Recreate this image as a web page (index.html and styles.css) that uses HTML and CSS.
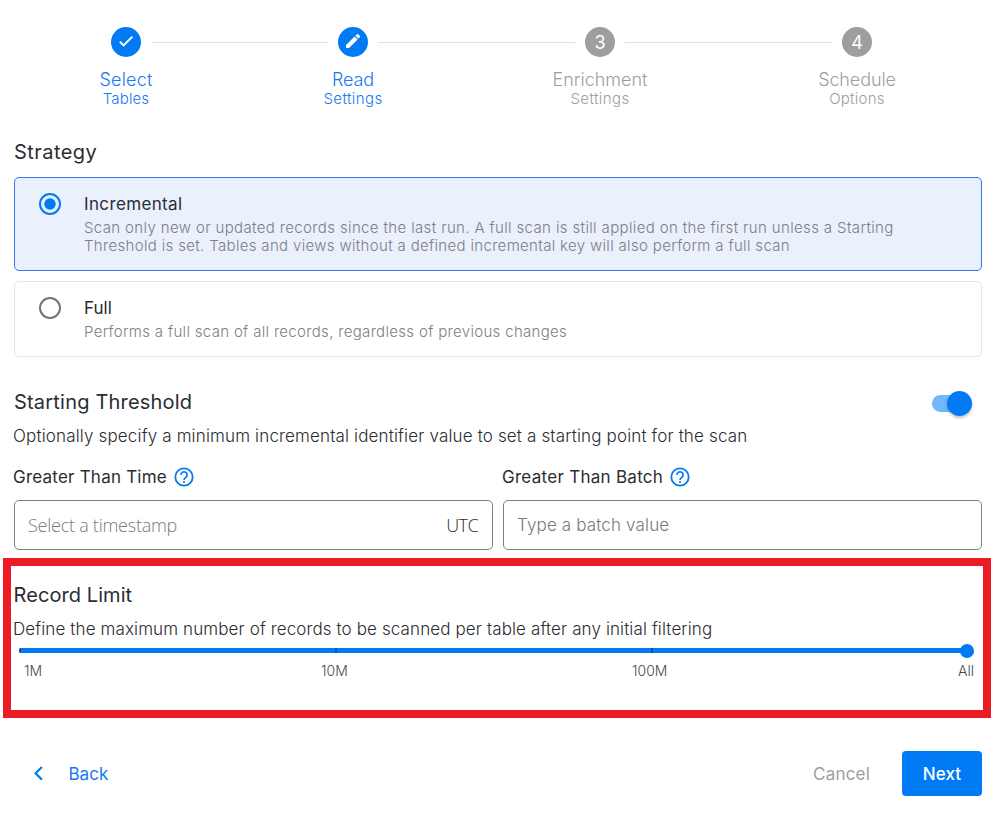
FILE: index.html
```html
<!DOCTYPE html>
<html lang="en">
<head>
<meta charset="utf-8">
<title>Scan settings</title>
<link rel="stylesheet" href="styles.css">
</head>
<body>
<main class="page">
  <nav class="stepper">
    <div class="step active">
      <span class="dot"><svg width="30" height="30" viewBox="0 0 30 30"><path d="M8.900 14.700l3.700 3.700 8.800-8.800" fill="none" stroke="#fff" stroke-width="2"/></svg></span>
      <span class="name t-select">Select</span><span class="sub t-tables">Tables</span>
    </div>
    <i class="line"></i>
    <div class="step active">
      <span class="dot"><svg width="30" height="30" viewBox="0 0 30 30"><path d="M8 18.100V21h3l8.600-8.500-3-3zM21.900 10.100a.9.9 0 0 0 0-1.200l-1.700-1.700a.9.9 0 0 0-1.200 0l-1.600 1.600 3 3z" fill="#fff"/></svg></span>
      <span class="name t-read">Read</span><span class="sub t-settings">Settings</span>
    </div>
    <i class="line"></i>
    <div class="step">
      <span class="dot">3</span>
      <span class="name">Enrichment</span><span class="sub t-settings">Settings</span>
    </div>
    <i class="line"></i>
    <div class="step">
      <span class="dot">4</span>
      <span class="name t-schedule">Schedule</span><span class="sub t-options">Options</span>
    </div>
  </nav>

  <h2 class="heading t-strategy">Strategy</h2>
  <div class="choices">
    <div class="choice selected">
      <i class="radio"></i>
      <div class="choice-text">
        <div class="choice-name t-incremental">Incremental</div>
        <div class="choice-desc"><span class="t-desc1">Scan only new or updated records since the last run. A full scan is still applied on the first run unless a Starting</span><br><span class="t-desc2">Threshold is set. Tables and views without a defined incremental key will also perform a full scan</span></div>
      </div>
    </div>
    <div class="choice">
      <i class="radio"></i>
      <div class="choice-text">
        <div class="choice-name">Full</div>
        <div class="choice-desc t-desc3">Performs a full scan of all records, regardless of previous changes</div>
      </div>
    </div>
  </div>

  <div class="threshold-head">
    <h2 class="heading t-threshold">Starting Threshold</h2>
    <span class="switch"><i class="knob"></i></span>
  </div>
  <p class="para t-para1">Optionally specify a minimum incremental identifier value to set a starting point for the scan</p>

  <div class="fields">
    <div class="field">
      <div class="label"><span class="t-time">Greater Than Time</span><svg width="20" height="20" viewBox="0 0 20 20"><circle cx="10" cy="10" r="8.700" fill="none" stroke="#007bf5" stroke-width="1.800"/><path d="M6.900 8a3.100 3.100 0 1 1 5.200 2.200C11 11.100 10 11.500 10 13" fill="none" stroke="#007bf5" stroke-width="1.700"/><path d="M9.100 14h1.800v1.800H9.100z" fill="#007bf5"/></svg></div>
      <div class="input system"><span class="placeholder t-stamp">Select a timestamp</span><span class="t-utc">UTC</span></div>
    </div>
    <div class="field">
      <div class="label"><span class="t-batch">Greater Than Batch</span><svg width="20" height="20" viewBox="0 0 20 20"><circle cx="10" cy="10" r="8.700" fill="none" stroke="#007bf5" stroke-width="1.800"/><path d="M6.900 8a3.100 3.100 0 1 1 5.200 2.200C11 11.100 10 11.500 10 13" fill="none" stroke="#007bf5" stroke-width="1.700"/><path d="M9.100 14h1.800v1.800H9.100z" fill="#007bf5"/></svg></div>
      <div class="input"><span class="placeholder t-value">Type a batch value</span></div>
    </div>
  </div>

  <section class="limit">
    <h2 class="heading t-limit">Record Limit</h2>
    <p class="para t-para2">Define the maximum number of records to be scanned per table after any initial filtering</p>
    <div class="track"><i class="tick"></i><i class="tick"></i><i class="tick"></i><i class="thumb"></i></div>
    <div class="marks"><span>1M</span><span>10M</span><span>100M</span><span>All</span></div>
  </section>

  <footer class="actions">
    <a class="back"><svg width="10" height="16" viewBox="0 0 10 16"><path d="M8.900 1 2.600 7.300l6.300 6.300" fill="none" stroke="#007bf5" stroke-width="2.200"/></svg><span>Back</span></a>
    <span class="cancel">Cancel</span>
    <span class="next">Next</span>
  </footer>
</main>
</body>
</html>
```
FILE: styles.css
```css
* { box-sizing: border-box; }
body {
  margin: 0;
  background: #fff;
  color: #2b2d31;
  font-family: Inter, "Liberation Sans", sans-serif;
  font-size: 18px;
  white-space: nowrap;
}
h2, p { margin: 0; }
.page { width: 998px; height: 813px; overflow: hidden; }

.stepper {
  display: grid;
  grid-template-columns: 50px 177px 50px 197px 50px 207px 50px;
  padding: 27px 0 0 101px;
  height: 137px;
}
.step { display: flex; flex-direction: column; align-items: center; color: #9e9e9e; }
.dot {
  width: 30px; height: 30px; border-radius: 50%;
  background: #9e9e9e; color: #fff;
  display: flex; align-items: center; justify-content: center;
  font-size: 18px;
}
.active { color: #1877f2; }
.active .dot { background: #007bf5; }
.name { font-size: 18px; line-height: 22px; margin-top: 12px; font-weight: 320; }
.sub { font-size: 15px; line-height: 18px; font-weight: 340; margin-top: -1px; }
.line { height: 1px; background: #e0e0e0; margin-top: 15px; }

.heading { font-size: 20px; line-height: 30px; font-weight: 430; margin-left: 14px; }

.choices { display: flex; flex-direction: column; gap: 10px; margin: 10px 16px 0 14px; }
.choice {
  display: flex; height: 76px; padding: 15px 24px;
  border: 1px solid #e4e4e4; border-radius: 5px;
}
.choice.selected { height: 94px; background: #eaf0fc; border-color: #2f7be8; }
.radio {
  width: 22px; height: 22px; border: 2px solid #757575; border-radius: 50%;
  margin-right: 23px; flex: none;
}
.selected .radio { border-color: #007bf5; background: radial-gradient(circle, #007bf5 5.3px, transparent 6px); }
.choice-name { font-size: 17px; line-height: 22px; }
.choice-desc { font-size: 15px; line-height: 18px; font-weight: 300; color: #7c7f84; margin-top: 4px; }

.threshold-head { display: flex; justify-content: space-between; margin-top: 30px; padding-right: 26px; }
.switch { width: 40px; height: 17px; border-radius: 9px; background: #73b6fa; margin-top: 8px; display: flex; justify-content: flex-end; align-items: center; }
.knob { width: 25px; height: 25px; border-radius: 50%; background: #007bf5; box-shadow: 0 2px 3px rgba(0,0,0,.25); flex: none; }
.para { font-size: 17px; line-height: 24px; font-weight: 300; margin: 7px 0 0 13px; }

.fields { display: grid; grid-template-columns: 479px 479px; gap: 10px; margin: 17px 0 0 14px; }
.label { height: 24px; line-height: 24px; font-size: 17px; font-weight: 430; display: flex; align-items: center; gap: 7px; margin-left: -1px; }
.input {
  display: flex; justify-content: space-between; align-items: center;
  height: 50px; margin-top: 11px; padding: 0 14px 0 13px;
  border: 1px solid #808080; border-radius: 5px; font-size: 17px; font-weight: 300;
}
.system { font-family: "Open Sans", "Noto Sans", sans-serif; font-size: 18px; font-weight: 350; }
.placeholder { color: #7a7a7a; }

.limit { width: 988px; height: 160px; margin: 8px 0 0 3px; border: 8px solid #ed1c24; padding-top: 14px; }
.limit .heading { margin-left: 2.5px; }
.limit .para { margin-left: 2px; }
.track { display: flex; align-items: center; height: 5px; width: 948px; margin: 7px 0 0 8px; border-radius: 3px; background: #007bf5; }
.tick { width: 2px; height: 5px; background: #07509c; margin-right: 314px; flex: none; }
.tick:first-child { border-radius: 2px 0 0 2px; }
.thumb { width: 14px; height: 14px; border-radius: 50%; background: #007bf5; flex: none; margin-left: -7px; }
.marks { display: grid; grid-template-columns: 297px 311px 326px auto; margin: 9px 0 0 13px; font-size: 14px; line-height: 18px; font-weight: 300; color: #4a4a4a; }

.actions { display: flex; align-items: center; margin: 33px 16px 0 33px; height: 45px; }
.back { display: flex; align-items: center; gap: 25px; color: #1877f2; font-size: 17px; font-weight: 400; margin-right: auto; }
.back span { margin-left: .5px; }
.cancel { color: #9e9e9e; font-size: 17px; margin-right: 32px; letter-spacing: .2px; }
.next { width: 80px; height: 45px; border-radius: 4px; background: #007bf5; color: #fff; display: flex; align-items: center; justify-content: center; font-size: 17px; font-weight: 500; letter-spacing: .15px; }

.t-select { letter-spacing: .2px; }
.t-tables { letter-spacing: .15px; }
.t-read { letter-spacing: -.15px; }
.t-settings { letter-spacing: .42px; }
.t-schedule { letter-spacing: -.1px; }
.t-options { letter-spacing: .27px; }
.t-strategy { letter-spacing: .45px; }
.t-incremental { letter-spacing: .36px; }
.t-desc1 { letter-spacing: .362px; }
.t-desc2 { letter-spacing: .33px; }
.t-desc3 { letter-spacing: .32px; }
.t-threshold { letter-spacing: .2px; }
.t-para1 { letter-spacing: .155px; }
.t-para2 { letter-spacing: .115px; }
.t-time { letter-spacing: .22px; }
.t-batch { letter-spacing: .28px; }
.t-stamp { letter-spacing: -.25px; }
.t-utc { letter-spacing: -.6px; }
.t-value { letter-spacing: .15px; }
.t-limit { letter-spacing: .08px; }
```
